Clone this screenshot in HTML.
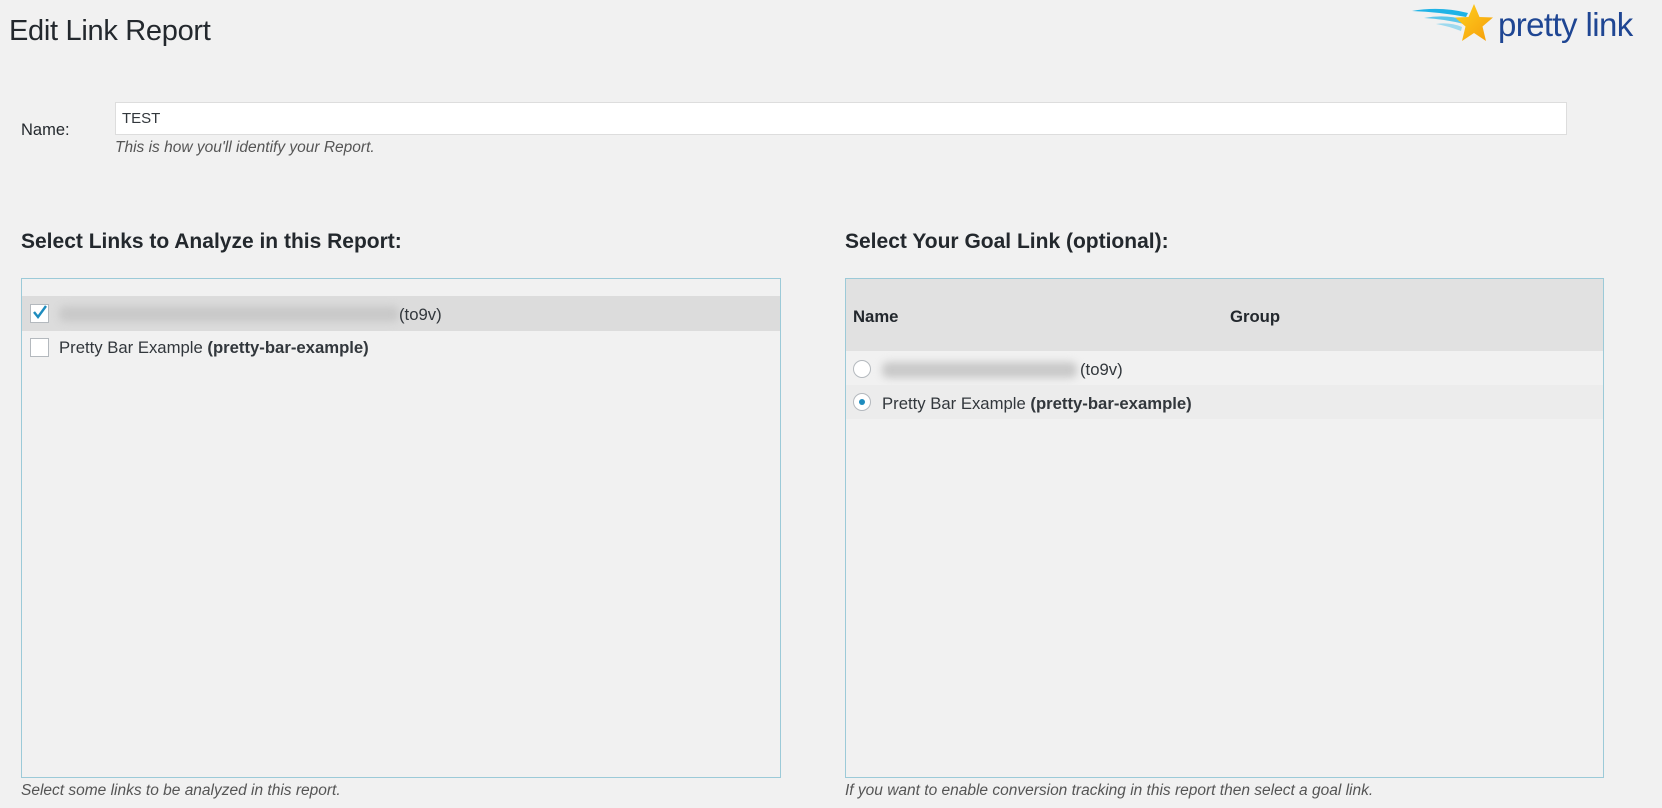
<!DOCTYPE html>
<html><head><meta charset="utf-8"><style>
*{box-sizing:border-box;margin:0;padding:0}
body{width:1662px;height:808px;background:#f1f1f1;font-family:"Liberation Sans",sans-serif;color:#23282d;position:relative;overflow:hidden}
.a{position:absolute;white-space:nowrap}
h1{position:absolute;left:9px;top:15px;font-size:29px;font-weight:400;color:#23282d;letter-spacing:-0.3px}
.lbl{font-size:16.5px;color:#23282d}
.hint{font-style:italic;font-size:15.5px;color:#555}
.h2{font-size:21px;font-weight:bold;color:#23282d}
.box{position:absolute;border:1px solid #9ccad8;top:278px;height:500px}
.row{position:absolute;left:0;right:0;height:35px}
.cb{position:absolute;width:19px;height:19px;border:1px solid #b4b9be;background:#fff}
.rd{position:absolute;width:18px;height:18px;border:1px solid #b4b9be;border-radius:50%;background:#fff}
.t{font-size:16.7px;color:#32373c}
.blur{position:absolute;height:16px;background:#c9c9c9;filter:blur(4px);border-radius:6px}
</style></head><body>
<h1>Edit Link Report</h1>
<svg class="a" style="left:1410px;top:2px" width="90" height="44" viewBox="0 0 90 44">
<path d="M2 9 Q30 4 58 11 L56 15 Q30 10 2 9Z" fill="#1fb3e6"/>
<path d="M14 16 Q36 12 55 18 L54 22 Q34 17 14 16Z" fill="#5cc6ea"/>
<path d="M26 22 Q40 20 52 25 L51 29 Q38 24 26 22Z" fill="#9dd9ee"/>
<defs><linearGradient id="g" x1="0" y1="0" x2="1" y2="1"><stop offset="0" stop-color="#ffd21f"/><stop offset="1" stop-color="#f59c0b"/></linearGradient></defs>
<path d="M64 2 L69.5 15 L83 15.5 L72.5 24.5 L76 39 L64 31 L52 39 L55.5 24.5 L45 15.5 L58.5 15Z" fill="url(#g)" stroke-linejoin="round"/>
</svg>
<div class="a" style="left:1498px;top:6px;font-size:33px;color:#1f4693;letter-spacing:-0.6px">pretty link</div>

<div class="a lbl" style="left:21px;top:121px">Name:</div>
<div class="a" style="left:115px;top:102px;width:1452px;height:33px;background:#fff;border:1px solid #ddd"></div>
<div class="a" style="left:122px;top:110px;font-size:15px;color:#32373c">TEST</div>
<div class="a hint" style="left:115px;top:139px">This is how you'll identify your Report.</div>

<div class="a h2" style="left:21px;top:230px">Select Links to Analyze in this Report:</div>
<div class="a h2" style="left:845px;top:230px">Select Your Goal Link (optional):</div>

<div class="box" style="left:21px;width:760px">
 <div class="row" style="top:17px;background:#dcdcdc"></div>
 <div class="cb" style="left:8px;top:25px"></div>
 <svg class="a" style="left:10px;top:25px" width="16" height="16" viewBox="0 0 16 16"><path d="M2 8 L6 13 L14 2" fill="none" stroke="#1e8cbe" stroke-width="2.4"/></svg>
 <div class="blur" style="left:37px;top:27px;width:340px"></div>
 <div class="a t" style="left:377px;top:26px">(to9v)</div>
 <div class="cb" style="left:8px;top:59px"></div>
 <div class="a t" style="left:37px;top:59px">Pretty Bar Example <b>(pretty-bar-example)</b></div>
</div>

<div class="box" style="left:845px;width:759px">
 <div class="row" style="top:0;height:72px;background:#e1e1e1"></div>
 <div class="a t" style="left:7px;top:28px;font-weight:bold;color:#23282d">Name</div>
 <div class="a t" style="left:384px;top:28px;font-weight:bold;color:#23282d">Group</div>
 <div class="rd" style="left:7px;top:81px"></div>
 <div class="blur" style="left:36px;top:83px;width:195px"></div>
 <div class="a t" style="left:234px;top:81px">(to9v)</div>
 <div class="row" style="top:106px;height:34px;background:#ececec"></div>
 <div class="rd" style="left:7px;top:114px"></div>
 <div class="a" style="left:13px;top:120px;width:6px;height:6px;border-radius:50%;background:#1e8cbe"></div>
 <div class="a t" style="left:36px;top:115px">Pretty Bar Example <b>(pretty-bar-example)</b></div>
</div>

<div class="a hint" style="left:21px;top:782px">Select some links to be analyzed in this report.</div>
<div class="a hint" style="left:845px;top:782px">If you want to enable conversion tracking in this report then select a goal link.</div>
</body></html>
